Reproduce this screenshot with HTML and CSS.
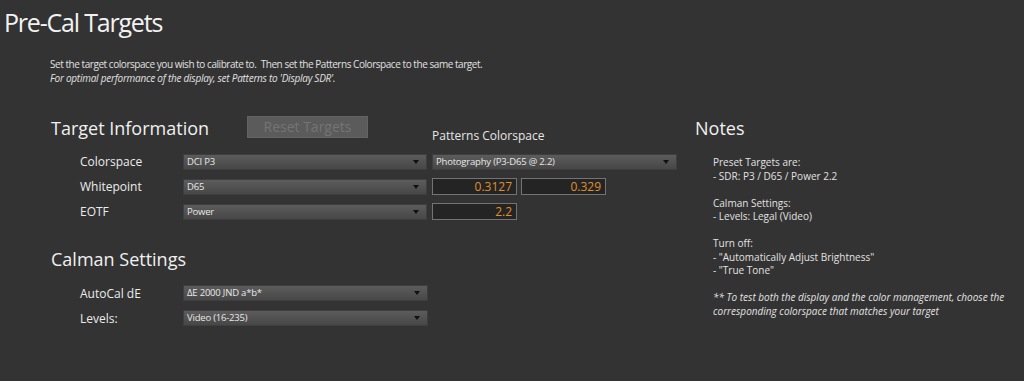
FILE: index.html
```html
<!DOCTYPE html>
<html lang="en">
<head>
  <meta charset="UTF-8" />
  <meta name="viewport" content="width=device-width, initial-scale=1.0" />
  <title>Pre-Cal Targets</title>
  <link rel="stylesheet" href="styles.css">
</head>
<body>

  <h1 class="page-title">Pre-Cal Targets</h1>

  <div class="intro">
    <p>Set the target colorspace you wish to calibrate to.&nbsp; Then set the Patterns Colorspace to the same target.</p>
    <p class="hint">For optimal performance of the display, set Patterns to 'Display SDR'.</p>
  </div>

  <main class="content">
    <section class="settings">

      <div class="section-head">
        <h2>Target Information</h2>
        <button class="reset-btn" disabled>Reset Targets</button>
        <span class="patterns-label">Patterns Colorspace</span>
      </div>

      <div class="form-grid">
        <label>Colorspace</label>
        <div class="dropdown">DCI P3</div>
        <div class="dropdown">Photography (P3-D65 @ 2.2)</div>

        <label>Whitepoint</label>
        <div class="dropdown">D65</div>
        <div class="value-pair">
          <input class="value-box" type="text" value="0.3127" />
          <input class="value-box" type="text" value="0.329" />
        </div>

        <label>EOTF</label>
        <div class="dropdown">Power</div>
        <div class="value-pair">
          <input class="value-box" type="text" value="2.2" />
        </div>
      </div>

      <h2 class="calman-head">Calman Settings</h2>

      <div class="form-grid calman-grid">
        <label>AutoCal dE</label>
        <div class="dropdown">ΔE 2000 JND a*b*</div>

        <label>Levels:</label>
        <div class="dropdown">Video (16-235)</div>
      </div>

    </section>

    <aside class="notes">
      <h2>Notes</h2>
      <div class="notes-body">
        <p>Preset Targets are:<br>- SDR: P3 / D65 / Power 2.2</p>
        <p>Calman Settings:<br>- Levels: Legal (Video)</p>
        <p>Turn off:<br>- "Automatically Adjust Brightness"<br>- "True Tone"</p>
        <p class="hint">** To test both the display and the color management, choose the<br>corresponding colorspace that matches your target</p>
      </div>
    </aside>
  </main>

</body>
</html>
```

FILE: styles.css
```css
/* Reset */
* {
  box-sizing: border-box;
  margin: 0;
  padding: 0;
}

html, body {
  background: #333333;
  color: #e4e4e4;
  font-family: "Open Sans", Arial, sans-serif;
  min-height: 100vh;
}

body {
  overflow: hidden;
}

/* Title */
.page-title {
  font-size: 25px;
  font-weight: normal;
  letter-spacing: -1.2px;
  line-height: 32px;
  color: #f2f2f2;
  margin-top: 6px;
  padding-left: 4px;
}

.intro {
  margin-top: 19px;
  padding-left: 50px;
  font-size: 10px;
  line-height: 14px;
  letter-spacing: -0.45px;
  color: #e0e0e0;
}

.intro .hint {
  letter-spacing: -0.25px;
}

.hint {
  font-style: italic;
}

/* Main area */
.content {
  display: flex;
  margin-top: 31px;
  padding-left: 51px;
}

.settings {
  width: 644px;
}

h2 {
  font-size: 18px;
  font-weight: normal;
  line-height: 22px;
  color: #f0f0f0;
}

.section-head {
  display: grid;
  grid-template-columns: 196px 185px auto;
  height: 28px;
}

.section-head h2 {
  margin-top: 1px;
}

.reset-btn {
  width: 121px;
  height: 22px;
  background: #5b5b5b;
  border: 1px solid #636363;
  color: #747474;
  font-family: inherit;
  font-size: 14px;
  line-height: 20px;
}

.patterns-label {
  align-self: end;
  font-size: 12px;
  line-height: 16px;
  color: #e6e6e6;
}

/* Form rows */
.form-grid {
  display: grid;
  grid-template-columns: 98px 244px 245px;
  grid-auto-rows: 17px;
  row-gap: 8px;
  column-gap: 5px;
  margin-top: 9px;
  margin-left: 29px;
  align-items: center;
}

.form-grid label {
  font-size: 12px;
  line-height: 17px;
  color: #ececec;
}

.calman-grid {
  margin-top: 15px;
  grid-auto-rows: 16px;
  row-gap: 9px;
  grid-template-columns: 98px 245px;
}

.dropdown {
  position: relative;
  height: 16px;
  padding-left: 3px;
  background: linear-gradient(#5c5c5c, #474747);
  border: 1px solid #3e3e3e;
  font-size: 9.5px;
  line-height: 14px;
  letter-spacing: -0.2px;
  color: #e8e8e8;
}

.dropdown::after {
  content: "";
  position: absolute;
  right: 7px;
  top: 5px;
  border-left: 3.5px solid transparent;
  border-right: 3.5px solid transparent;
  border-top: 4px solid #111;
}

.value-pair {
  display: flex;
  gap: 4px;
  height: 17px;
}

.value-box {
  width: 85px;
  height: 17px;
  background: #242424;
  border: 1px solid #737373;
  color: #e0902a;
  font-family: inherit;
  font-size: 12px;
  text-align: right;
  padding-right: 4px;
  outline: none;
}

.calman-head {
  margin-top: 28px;
}

/* Notes */
.notes {
  padding-top: 1px;
}

.notes-body {
  margin-top: 17px;
  padding-left: 18px;
  font-size: 10px;
  line-height: 13.5px;
  color: #e2e2e2;
  white-space: nowrap;
}

.notes-body p {
  margin-bottom: 13.5px;
}
```
